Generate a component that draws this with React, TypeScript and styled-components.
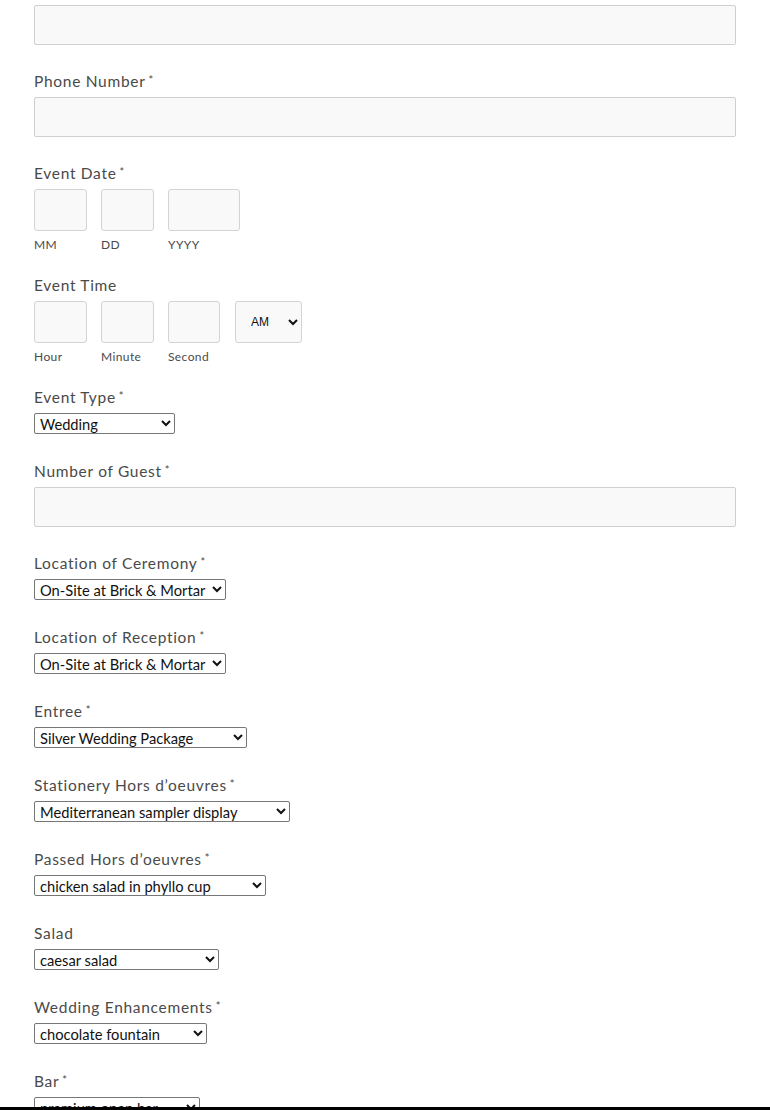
import React from "react";
import styled, { createGlobalStyle } from "styled-components";

const GlobalStyle = createGlobalStyle`
  html, body {
    margin: 0;
    padding: 0;
    background: #fff;
  }
  body {
    font-family: "Lato", "Open Sans", sans-serif;
    overflow: hidden;
  }
`;

const Page = styled.div`
  position: relative;
  height: 1110px;
  overflow: hidden;
`;

const Form = styled.form`
  padding: 5px 34px 0 34px;
  display: flex;
  flex-direction: column;
`;

const Field = styled.div<{ $gap?: number }>`
  display: flex;
  flex-direction: column;
  align-items: flex-start;
  margin-bottom: ${(p) => p.$gap ?? 26}px;
`;

const Label = styled.label`
  display: block;
  font-size: 15.5px;
  line-height: 20px;
  height: 20px;
  color: #4a4a4a;
  letter-spacing: 0.7px;
  margin-bottom: 6px;
`;

const Req = styled.span`
  font-size: 11px;
  line-height: 0;
  position: relative;
  top: -3px;
  margin-left: 3px;
`;

const TextInput = styled.input`
  box-sizing: border-box;
  width: 100%;
  height: 40px;
  border: 1px solid #cfcfcf;
  border-radius: 2px;
  background: #f9f9f9;
  outline: none;
`;

const Row = styled.div`
  display: flex;
  gap: 14px;
  align-items: flex-start;
`;

const Part = styled.div`
  display: flex;
  flex-direction: column;
`;

const SmallBox = styled.input<{ $w: number }>`
  box-sizing: border-box;
  width: ${(p) => p.$w}px;
  height: 42px;
  border: 1px solid #d3d3d3;
  border-radius: 3px;
  background: #f9f9f9;
  outline: none;
`;

const SubLabel = styled.span`
  font-size: 12px;
  line-height: 16px;
  margin-top: 6px;
  color: #4a4a4a;
  letter-spacing: 0.4px;
`;

const AmSelect = styled.select`
  box-sizing: border-box;
  width: 67px;
  height: 42px;
  margin-left: 1px;
  border: 1px solid #d3d3d3;
  border-radius: 3px;
  background: #f9f9f9;
  font-family: "Liberation Sans", Arial, sans-serif;
  font-size: 12px;
  color: #111;
  padding-left: 11px;
`;

const Select = styled.select<{ $w: number }>`
  box-sizing: border-box;
  width: ${(p) => p.$w}px;
  height: 21px;
  border: 1px solid #767676;
  border-radius: 2px;
  background: #fff;
  font-family: "Lato", "Open Sans", sans-serif;
  font-size: 14.7px;
  letter-spacing: 0;
  color: #111;
  padding: 0 0 0 1px;
`;

const BottomEdge = styled.div`
  position: absolute;
  left: 0;
  right: 0;
  bottom: 0;
  height: 3px;
  background: #000;
`;

const selects: { label: string; req: boolean; value: string; w: number }[] = [
  { label: "Location of Ceremony", req: true, value: "On-Site at Brick & Mortar", w: 192 },
  { label: "Location of Reception", req: true, value: "On-Site at Brick & Mortar", w: 192 },
  { label: "Entree", req: true, value: "Silver Wedding Package", w: 213 },
  { label: "Stationery Hors d\u2019oeuvres", req: true, value: "Mediterranean sampler display", w: 256 },
  { label: "Passed Hors d\u2019oeuvres", req: true, value: "chicken salad in phyllo cup", w: 232 },
  { label: "Salad", req: false, value: "caesar salad", w: 185 },
  { label: "Wedding Enhancements", req: true, value: "chocolate fountain", w: 173 },
  { label: "Bar", req: true, value: "premium open bar", w: 166 },
];

export default function App() {
  return (
    <Page>
      <GlobalStyle />
      <Form>
        <Field>
          <TextInput type="email" />
        </Field>
        <Field>
          <Label>
            Phone Number<Req>*</Req>
          </Label>
          <TextInput type="tel" />
        </Field>
        <Field $gap={22}>
          <Label>
            Event Date<Req>*</Req>
          </Label>
          <Row>
            <Part>
              <SmallBox $w={53} />
              <SubLabel>MM</SubLabel>
            </Part>
            <Part>
              <SmallBox $w={53} />
              <SubLabel>DD</SubLabel>
            </Part>
            <Part>
              <SmallBox $w={72} />
              <SubLabel>YYYY</SubLabel>
            </Part>
          </Row>
        </Field>
        <Field $gap={22}>
          <Label>Event Time</Label>
          <Row>
            <Part>
              <SmallBox $w={53} />
              <SubLabel>Hour</SubLabel>
            </Part>
            <Part>
              <SmallBox $w={53} />
              <SubLabel>Minute</SubLabel>
            </Part>
            <Part>
              <SmallBox $w={52} />
              <SubLabel>Second</SubLabel>
            </Part>
            <AmSelect defaultValue="AM">
              <option>AM</option>
              <option>PM</option>
            </AmSelect>
          </Row>
        </Field>
        <Field $gap={27}>
          <Label>
            Event Type<Req>*</Req>
          </Label>
          <Select $w={141} defaultValue="Wedding">
            <option>Wedding</option>
          </Select>
        </Field>
        <Field>
          <Label>
            Number of Guest<Req>*</Req>
          </Label>
          <TextInput type="text" />
        </Field>
        {selects.map((s) => (
          <Field key={s.label} $gap={27}>
            <Label>
              {s.label}
              {s.req && <Req>*</Req>}
            </Label>
            <Select $w={s.w} defaultValue={s.value}>
              <option>{s.value}</option>
            </Select>
          </Field>
        ))}
      </Form>
      <BottomEdge />
    </Page>
  );
}
